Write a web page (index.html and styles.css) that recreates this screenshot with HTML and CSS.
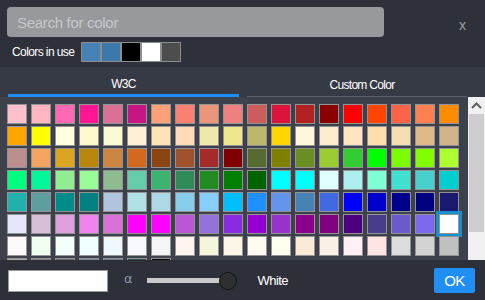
FILE: index.html
```html
<!DOCTYPE html>
<html>
<head>
<meta charset="utf-8">
<link rel="stylesheet" href="styles.css">
</head>
<body>
<div class="picker">
  <header class="top">
    <div class="search-row">
      <input class="search" type="text" placeholder="Search for color">
      <span class="close">x</span>
    </div>
    <div class="inuse">
      <span class="inuse-label">Colors in use</span>
      <div class="inuse-swatches">
        <span class="used" style="background:#4682b4"></span>
        <span class="used" style="background:#3b78ab"></span>
        <span class="used" style="background:#000000"></span>
        <span class="used" style="background:#ffffff"></span>
        <span class="used" style="background:#4d4d4d"></span>
      </div>
    </div>
  </header>
  <nav class="tabs">
    <div class="tab tab-active">W3C</div>
    <div class="tab tab-other">Custom Color</div>
  </nav>
  <section class="palette">
    <div class="grid">
      <span class="sw" style="background:#FFC0CB"></span><span class="sw" style="background:#FFB6C1"></span><span class="sw" style="background:#FF69B4"></span><span class="sw" style="background:#FF1493"></span><span class="sw" style="background:#DB7093"></span><span class="sw" style="background:#C71585"></span><span class="sw" style="background:#FFA07A"></span><span class="sw" style="background:#FA8072"></span><span class="sw" style="background:#E9967A"></span><span class="sw" style="background:#F08080"></span><span class="sw" style="background:#CD5C5C"></span><span class="sw" style="background:#DC143C"></span><span class="sw" style="background:#B22222"></span><span class="sw" style="background:#8B0000"></span><span class="sw" style="background:#FF0000"></span><span class="sw" style="background:#FF4500"></span><span class="sw" style="background:#FF6347"></span><span class="sw" style="background:#FF7F50"></span><span class="sw" style="background:#FF8C00"></span>
      <span class="sw" style="background:#FFA500"></span><span class="sw" style="background:#FFFF00"></span><span class="sw" style="background:#FFFFE0"></span><span class="sw" style="background:#FFFACD"></span><span class="sw" style="background:#FAFAD2"></span><span class="sw" style="background:#FFEFD5"></span><span class="sw" style="background:#FFE4B5"></span><span class="sw" style="background:#FFDAB9"></span><span class="sw" style="background:#EEE8AA"></span><span class="sw" style="background:#F0E68C"></span><span class="sw" style="background:#BDB76B"></span><span class="sw" style="background:#FFD700"></span><span class="sw" style="background:#FFF8DC"></span><span class="sw" style="background:#FFEBCD"></span><span class="sw" style="background:#FFE4C4"></span><span class="sw" style="background:#FFDEAD"></span><span class="sw" style="background:#F5DEB3"></span><span class="sw" style="background:#DEB887"></span><span class="sw" style="background:#D2B48C"></span>
      <span class="sw" style="background:#BC8F8F"></span><span class="sw" style="background:#F4A460"></span><span class="sw" style="background:#DAA520"></span><span class="sw" style="background:#B8860B"></span><span class="sw" style="background:#CD853F"></span><span class="sw" style="background:#D2691E"></span><span class="sw" style="background:#8B4513"></span><span class="sw" style="background:#A0522D"></span><span class="sw" style="background:#A52A2A"></span><span class="sw" style="background:#800000"></span><span class="sw" style="background:#556B2F"></span><span class="sw" style="background:#808000"></span><span class="sw" style="background:#6B8E23"></span><span class="sw" style="background:#9ACD32"></span><span class="sw" style="background:#32CD32"></span><span class="sw" style="background:#00FF00"></span><span class="sw" style="background:#7CFC00"></span><span class="sw" style="background:#7FFF00"></span><span class="sw" style="background:#ADFF2F"></span>
      <span class="sw" style="background:#00FF7F"></span><span class="sw" style="background:#00FA9A"></span><span class="sw" style="background:#90EE90"></span><span class="sw" style="background:#98FB98"></span><span class="sw" style="background:#8FBC8F"></span><span class="sw" style="background:#66CDAA"></span><span class="sw" style="background:#3CB371"></span><span class="sw" style="background:#2E8B57"></span><span class="sw" style="background:#228B22"></span><span class="sw" style="background:#008000"></span><span class="sw" style="background:#006400"></span><span class="sw" style="background:#00FFFF"></span><span class="sw" style="background:#00FFFF"></span><span class="sw" style="background:#E0FFFF"></span><span class="sw" style="background:#AFEEEE"></span><span class="sw" style="background:#7FFFD4"></span><span class="sw" style="background:#40E0D0"></span><span class="sw" style="background:#48D1CC"></span><span class="sw" style="background:#00CED1"></span>
      <span class="sw" style="background:#20B2AA"></span><span class="sw" style="background:#5F9EA0"></span><span class="sw" style="background:#008B8B"></span><span class="sw" style="background:#008080"></span><span class="sw" style="background:#B0C4DE"></span><span class="sw" style="background:#B0E0E6"></span><span class="sw" style="background:#ADD8E6"></span><span class="sw" style="background:#87CEEB"></span><span class="sw" style="background:#87CEFA"></span><span class="sw" style="background:#00BFFF"></span><span class="sw" style="background:#1E90FF"></span><span class="sw" style="background:#6495ED"></span><span class="sw" style="background:#4682B4"></span><span class="sw" style="background:#4169E1"></span><span class="sw" style="background:#0000FF"></span><span class="sw" style="background:#0000CD"></span><span class="sw" style="background:#00008B"></span><span class="sw" style="background:#000080"></span><span class="sw" style="background:#191970"></span>
      <span class="sw" style="background:#E6E6FA"></span><span class="sw" style="background:#D8BFD8"></span><span class="sw" style="background:#DDA0DD"></span><span class="sw" style="background:#EE82EE"></span><span class="sw" style="background:#DA70D6"></span><span class="sw" style="background:#FF00FF"></span><span class="sw" style="background:#FF00FF"></span><span class="sw" style="background:#BA55D3"></span><span class="sw" style="background:#9370DB"></span><span class="sw" style="background:#8A2BE2"></span><span class="sw" style="background:#9400D3"></span><span class="sw" style="background:#9932CC"></span><span class="sw" style="background:#8B008B"></span><span class="sw" style="background:#800080"></span><span class="sw" style="background:#4B0082"></span><span class="sw" style="background:#483D8B"></span><span class="sw" style="background:#6A5ACD"></span><span class="sw" style="background:#7B68EE"></span><span class="sw sw-selected" style="background:#FFFFFF"></span>
      <span class="sw" style="background:#FFFAFA"></span><span class="sw" style="background:#F0FFF0"></span><span class="sw" style="background:#F5FFFA"></span><span class="sw" style="background:#F0FFFF"></span><span class="sw" style="background:#F0F8FF"></span><span class="sw" style="background:#F8F8FF"></span><span class="sw" style="background:#F5F5F5"></span><span class="sw" style="background:#FFF5EE"></span><span class="sw" style="background:#F5F5DC"></span><span class="sw" style="background:#FDF5E6"></span><span class="sw" style="background:#FFFAF0"></span><span class="sw" style="background:#FFFFF0"></span><span class="sw" style="background:#FAEBD7"></span><span class="sw" style="background:#FAF0E6"></span><span class="sw" style="background:#FFF0F5"></span><span class="sw" style="background:#FFE4E1"></span><span class="sw" style="background:#DCDCDC"></span><span class="sw" style="background:#D3D3D3"></span><span class="sw" style="background:#C0C0C0"></span>
      <span class="sw" style="background:#A9A9A9"></span><span class="sw" style="background:#808080"></span><span class="sw" style="background:#696969"></span><span class="sw" style="background:#778899"></span><span class="sw" style="background:#708090"></span><span class="sw" style="background:#2F4F4F"></span><span class="sw" style="background:#000000"></span>
    </div>
    <div class="scrollbar">
      <div class="sb-arrow">
        <svg width="11" height="7" viewBox="0 0 11 7"><path d="M1 6 L5.5 1.5 L10 6" fill="none" stroke="#5f5f5f" stroke-width="2"/></svg>
      </div>
      <div class="sb-thumb"></div>
      <div class="sb-rest"></div>
      <div class="sb-arrow">
        <svg width="11" height="7" viewBox="0 0 11 7"><path d="M1 1 L5.5 5.5 L10 1" fill="none" stroke="#5f5f5f" stroke-width="2"/></svg>
      </div>
    </div>
  </section>
  <footer class="bottom">
    <input class="hex" type="text" value="">
    <span class="alpha">α</span>
    <div class="slider">
      <div class="track"></div>
      <div class="knob"></div>
    </div>
    <span class="name">White</span>
    <button class="ok">OK</button>
  </footer>
</div>
</body>
</html>
```

FILE: styles.css
```css
* { box-sizing: border-box; }

html, body {
  margin: 0;
  padding: 0;
  background: #2e313a;
}

body {
  font-family: "Liberation Sans", Arial, sans-serif;
  width: 485px;
  height: 300px;
  overflow: hidden;
}

.picker {
  width: 485px;
  height: 300px;
  display: flex;
  flex-direction: column;
}

/* header */
.top {
  height: 67px;
  padding: 7px 0 0 7px;
  background: #2e313a;
}

.search-row {
  display: flex;
  align-items: center;
}

.search {
  width: 377px;
  height: 30px;
  border: none;
  border-radius: 4px;
  background: #97999d;
  padding: 0 0 0 10px;
  margin: 0;
  font-family: "Liberation Sans", Arial, sans-serif;
  font-size: 15px;
  letter-spacing: -0.3px;
  color: #ffffff;
  outline: none;
}

.search::placeholder {
  color: #c6c8cb;
}

.close {
  margin-left: auto;
  margin-right: 19px;
  margin-top: 6px;
  color: #9c9ea3;
  font-size: 14px;
  line-height: 14px;
}

.inuse {
  display: flex;
  align-items: center;
  height: 20px;
  margin-top: 5px;
  padding-left: 5px;
}

.inuse-label {
  color: #ffffff;
  font-size: 12px;
  letter-spacing: -0.6px;
  width: 69px;
}

.inuse-swatches {
  display: flex;
}

.used {
  display: block;
  width: 20px;
  height: 20px;
  border: 1px solid #8d8d8d;
}

/* tabs */
.tabs {
  height: 30px;
  background: #363a45;
  display: flex;
  padding: 0 0 0 8px;
}

.tab {
  color: #ffffff;
  font-size: 12px;
  letter-spacing: -0.7px;
  line-height: 20px;
  text-align: center;
  padding-top: 7px;
}

.tab-active {
  width: 231px;
  border-bottom: 3px solid #1e8ff5;
}

.tab-other {
  width: 220px;
  margin-left: 8px;
  padding-left: 10px;
  padding-top: 8px;
  height: 30px;
  border-bottom: 1px solid #5c5f66;
}

/* palette */
.palette {
  height: 163px;
  background: #3d414b;
  display: flex;
  overflow: hidden;
}

.grid {
  padding: 7px 0 0 7px;
  display: grid;
  grid-template-columns: repeat(19, 20px);
  grid-auto-rows: 20px;
  column-gap: 4px;
  row-gap: 2px;
  align-content: start;
}

.sw {
  display: block;
  width: 20px;
  height: 20px;
  border: 1px solid #939393;
}

.sw-selected {
  box-shadow: 0 0 0 3px #1a8dce;
}

.scrollbar {
  margin-left: auto;
  width: 17px;
  height: 175px;
  flex-shrink: 0;
  background: #f0f0f0;
  display: flex;
  flex-direction: column;
}

.sb-arrow {
  height: 17px;
  display: flex;
  align-items: center;
  justify-content: center;
}

.sb-thumb {
  height: 118px;
  margin: 0 1px 0 1px;
  background: #cdcdcd;
}

.sb-rest {
  flex: 1;
}

/* bottom bar */
.bottom {
  height: 40px;
  background: #2d3039;
  display: flex;
  align-items: center;
  padding-left: 8px;
  padding-top: 1px;
}

.hex {
  width: 100px;
  height: 22px;
  margin: 0;
  border: 1px solid #9a9a9a;
  background: #ffffff;
  padding: 0 4px;
  outline: none;
}

.alpha {
  margin-left: 16px;
  color: #8b99ad;
  font-family: "DejaVu Sans", sans-serif;
  font-size: 13px;
  line-height: 14px;
  margin-top: -3px;
}

.slider {
  position: relative;
  margin-left: 14px;
  width: 90px;
  height: 18px;
  display: flex;
  align-items: center;
}

.track {
  width: 88px;
  height: 5px;
  background: #c8c8c8;
}

.knob {
  position: absolute;
  left: 72px;
  top: 0;
  width: 18px;
  height: 18px;
  border-radius: 50%;
  background: #2f2f31;
  border: 1.5px solid #141414;
}

.name {
  margin-left: 21px;
  color: #ffffff;
  font-size: 13px;
  letter-spacing: -0.6px;
}

.ok {
  margin-left: auto;
  margin-right: 10px;
  width: 41px;
  height: 25px;
  border: none;
  border-radius: 2px;
  background: #1f8ff4;
  color: #ffffff;
  font-family: "Liberation Sans", Arial, sans-serif;
  font-size: 15px;
  letter-spacing: -0.5px;
  padding: 0;
}
```
